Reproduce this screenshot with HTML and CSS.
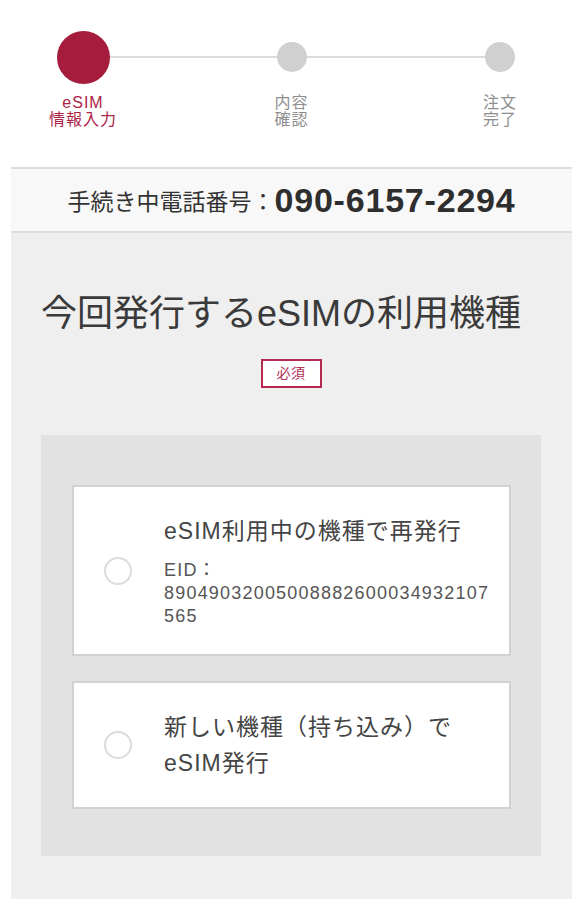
FILE: index.html
```html
<!DOCTYPE html>
<html lang="ja">
<head>
<meta charset="utf-8">
<title>eSIM再発行</title>
<link rel="stylesheet" href="styles.css">
</head>
<body>
<div class="page">
  <div class="stepper">
    <div class="step is-active">
      <div class="step-dot-wrap"><span class="step-dot"></span></div>
      <div class="step-label">eSIM<br>情報入力</div>
    </div>
    <div class="step">
      <div class="step-dot-wrap"><span class="step-dot"></span></div>
      <div class="step-label">内容<br>確認</div>
    </div>
    <div class="step">
      <div class="step-dot-wrap"><span class="step-dot"></span></div>
      <div class="step-label">注文<br>完了</div>
    </div>
  </div>

  <div class="phone-band">
    <span class="phone-label">手続き中電話番号：</span><span class="phone-number">090-6157-2294</span>
  </div>

  <main class="main">
    <h1 class="title">今回発行するeSIMの利用機種</h1>
    <div class="badge-row"><span class="badge">必須</span></div>

    <div class="choices">
      <label class="card">
        <span class="radio"></span>
        <span class="card-body">
          <span class="card-title">eSIM利用中の機種で再発行</span>
          <span class="card-eid">EID：<br>89049032005008882600034932107565</span>
        </span>
      </label>
      <label class="card">
        <span class="radio"></span>
        <span class="card-body">
          <span class="card-title">新しい機種（持ち込み）で<br>eSIM発行</span>
        </span>
      </label>
    </div>
  </main>
</div>
</body>
</html>
```

FILE: styles.css
```css
* {
  box-sizing: border-box;
}

html, body {
  margin: 0;
  padding: 0;
  background: #ffffff;
}

body {
  font-family: "Liberation Sans", "Noto Sans CJK JP", sans-serif;
  color: #333333;
}

.page {
  margin: 0 12px 0 11px;
}

/* ---------- stepper ---------- */
.stepper {
  position: relative;
  display: flex;
  justify-content: space-between;
  padding-top: 31px;
}

.stepper::before {
  content: "";
  position: absolute;
  top: 56px;
  left: 72px;
  right: 72px;
  height: 2px;
  background: #dcdcdc;
}

.step {
  position: relative;
  width: 144px;
  display: flex;
  flex-direction: column;
  align-items: center;
}

.step-dot-wrap {
  height: 52px;
  display: flex;
  align-items: center;
  justify-content: center;
}

.step-dot {
  display: block;
  width: 30px;
  height: 30px;
  border-radius: 50%;
  background: #d0d0d0;
}

.step.is-active .step-dot {
  width: 53px;
  height: 53px;
  background: #a51c3c;
}

.step-label {
  margin-top: 11px;
  font-size: 16px;
  line-height: 17px;
  letter-spacing: 1px;
  text-align: center;
  color: #8e8e8e;
}

.step.is-active .step-label {
  color: #ac2347;
}

/* ---------- phone band ---------- */
.phone-band {
  margin-top: 39px;
  height: 66px;
  border-top: 2px solid #dedede;
  border-bottom: 2px solid #dedede;
  background: #f8f8f8;
  display: flex;
  align-items: center;
  justify-content: center;
  color: #333333;
}

.phone-label {
  font-size: 23px;
  letter-spacing: 0;
}

.phone-number {
  font-size: 34px;
  font-weight: bold;
  letter-spacing: 0.8px;
  color: #2e2e2e;
}

/* ---------- main ---------- */
.main {
  background: #efefef;
  padding: 57px 31px 43px 30px;
}

.title {
  margin: 0;
  font-size: 36px;
  line-height: 48px;
  font-weight: normal;
  color: #3a3a3a;
  white-space: nowrap;
}

.badge-row {
  margin-top: 21px;
  display: flex;
  justify-content: center;
}

.badge {
  display: block;
  height: 29px;
  padding: 0 14px;
  border: 2px solid #b42a50;
  background: #ffffff;
  color: #b3305a;
  font-size: 14px;
  line-height: 25px;
  letter-spacing: 0.5px;
}

.choices {
  margin-top: 47px;
  background: #e2e2e2;
  padding: 50px 30px 47px 31px;
  display: flex;
  flex-direction: column;
  gap: 25px;
}

.card {
  display: flex;
  align-items: center;
  background: #ffffff;
  border: 2px solid #d2d2d2;
  padding: 26px 12px 26px 30px;
}

.radio {
  flex: none;
  width: 28px;
  height: 28px;
  border-radius: 50%;
  border: 2px solid #dcdcdc;
  background: #ffffff;
}

.card-body {
  margin-left: 32px;
  flex: 1;
  min-width: 0;
  display: flex;
  flex-direction: column;
}

.card-title {
  font-size: 23px;
  line-height: 36px;
  letter-spacing: 1px;
  color: #444444;
}

.card-eid {
  margin-top: 10px;
  font-size: 18px;
  line-height: 23px;
  letter-spacing: 1.2px;
  color: #555555;
  word-break: break-all;
}
```
